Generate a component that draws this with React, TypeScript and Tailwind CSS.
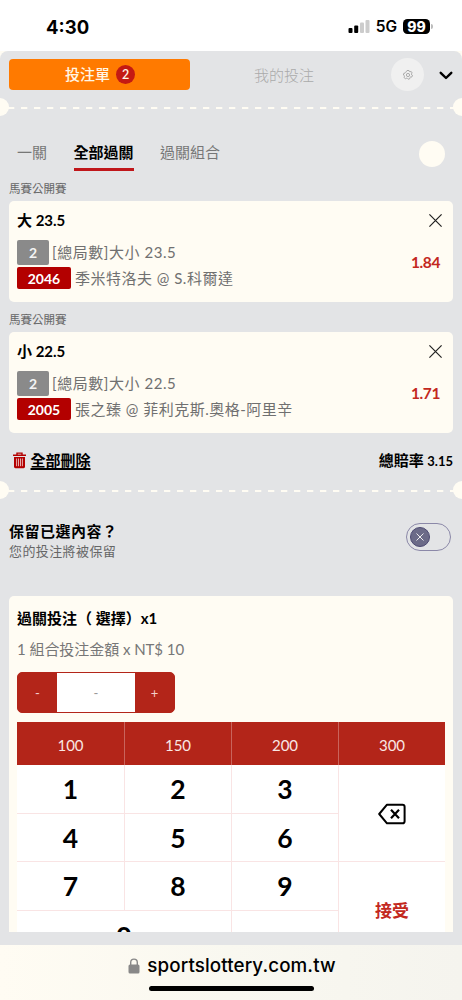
const selections = [
  { league: '馬賽公開賽', pick: '大 23.5', count: '2', market: '[總局數]大小 23.5', code: '2046', match: '季米特洛夫 @ S.科爾達', odds: '1.84' },
  { league: '馬賽公開賽', pick: '小 22.5', count: '2', market: '[總局數]大小 22.5', code: '2005', match: '張之臻 @ 菲利克斯.奧格-阿里辛', odds: '1.71' },
];

const amounts = ['100', '150', '200', '300'];
const digitRows = [
  ['1', '2', '3'],
  ['4', '5', '6'],
  ['7', '8', '9'],
];

function StatusBar() {
  return (
    <div className="h-[51px] shrink-0 bg-white flex items-start justify-between pl-[46px] pr-[29px] font-[Inter,sans-serif] text-black">
      <span className="mt-[15px] text-[18.5px] leading-6 font-bold">4:30</span>
      <div className="mt-[18px] flex items-center h-[17px]">
        <svg width="22" height="15" viewBox="0 0 22 15" className="mr-[6px]">
          <rect x="0.5" y="9" width="4" height="5" rx="1" fill="#000" />
          <rect x="6.2" y="6.5" width="4" height="7.5" rx="1" fill="#000" />
          <rect x="12" y="3.5" width="4" height="10.5" rx="1" fill="#ccc" />
          <rect x="17.5" y="1" width="4" height="13" rx="1" fill="#ccc" />
        </svg>
        <span className="text-[15.5px] leading-[17px] font-semibold mr-[6px]">5G</span>
        <span className="w-[27px] h-[15px] rounded-[4.5px] bg-black text-white text-[14px] leading-[15px] font-extrabold text-center">99</span>
        <span className="ml-px w-[2px] h-[5px] rounded-r-full bg-[#bbb]" />
      </div>
    </div>
  );
}

function Divider() {
  return (
    <div className="relative h-[18px] overflow-hidden flex items-center">
      <svg width="462" height="2" className="mt-px block">
        <line x1="8" y1="1" x2="462" y2="1" stroke="#fffcf3" strokeWidth="2" strokeDasharray="6.3 6.7" />
      </svg>
      <span className="absolute -left-[9px] top-0 size-[18px] rounded-full bg-[#fffcf3]" />
      <span className="absolute -right-[9px] top-0 size-[18px] rounded-full bg-[#fffcf3]" />
    </div>
  );
}

function Selection({ item }: { item: (typeof selections)[number] }) {
  return (
    <div className="h-[131px] px-[9px]">
      <p className="h-[20px] mb-[3px] text-[11.5px] leading-[21px] text-[#666]">{item.league}</p>
      <div className="h-[101px] rounded-[5px] bg-[#fffcf3] pl-2 pr-[13px] pt-[7px]">
        <div className="flex h-[24px] items-center justify-between">
          <span className="text-[15px] leading-6 font-bold text-black">{item.pick}</span>
          <svg width="13" height="13" viewBox="0 0 13 13" className="mr-[-2px]" stroke="#222" strokeWidth="1.2">
            <path d="M.4.4 12.6 12.6M12.6.4.4 12.6" />
          </svg>
        </div>
        <div className="mt-[8px] flex justify-between">
          <div className="text-[15px] text-[#707070]">
            <div className="flex h-[25px] items-center">
              <span className="w-[32px] h-[25px] mr-[3px] rounded-[2px] bg-[#8a8a8a] text-center text-[14px] leading-[25px] font-bold text-[#f4f4f4]">{item.count}</span>
              <span className="leading-[25px] tracking-[0.55px]">{item.market}</span>
            </div>
            <div className="mt-[2px] flex h-[22px] items-center">
              <span className="w-[54px] h-[22px] mr-[4px] rounded-[2px] bg-[#b30000] text-center text-[14px] leading-[23px] font-bold text-white">{item.code}</span>
              <span className="leading-[22px] tracking-[0.5px]">{item.match}</span>
            </div>
          </div>
          <span className="mt-[11px] text-[15.5px] leading-[22px] font-bold tracking-[-0.4px] text-[#c3281e]">{item.odds}</span>
        </div>
      </div>
    </div>
  );
}

function Keypad() {
  return (
    <div className="w-[428px]">
      <div className="grid h-[43px] grid-cols-4 bg-[#b32519]">
        {amounts.map((amount) => (
          <div key={amount} className="border-l border-[#c9645c] first:border-l-0 text-center text-[15px] leading-[46px] text-[#f9e7e4]">
            {amount}
          </div>
        ))}
      </div>
      <div className="flex h-[220px] bg-white text-black">
        <div className="w-[321px]">
          {digitRows.map((row) => (
            <div key={row[0]} className="grid grid-cols-3 border-b border-[#f9e4e4]">
              {row.map((digit) => (
                <div key={digit} className="h-[47.6px] border-l border-[#f9e4e4] first:border-l-0 text-center text-[26.5px] leading-[49px] font-bold">
                  {digit}
                </div>
              ))}
            </div>
          ))}
          <div className="flex">
            <div className="h-[49px] w-[214px] text-center text-[26.5px] leading-[50px] font-bold">0</div>
            <div className="h-[49px] w-[107px] border-l border-[#f9e4e4]" />
          </div>
        </div>
        <div className="w-[107px] border-l border-[#f9e4e4]">
          <div className="flex h-[97px] items-center justify-center border-b border-[#f9e4e4]">
            <svg width="28" height="22" viewBox="0 0 28 22" fill="none" stroke="#000" strokeWidth="2" strokeLinejoin="round" className="mt-px">
              <path d="M9 1.7H24.5Q26.6 1.7 26.6 3.8V18.2Q26.6 20.3 24.5 20.3H9L1.2 11Z" />
              <path d="M13 6.8 21 15.2M21 6.8 13 15.2" strokeWidth="2.2" />
            </svg>
          </div>
          <div className="h-[97px] text-center text-[17px] leading-[97px] font-bold text-[#c3281e]">接受</div>
        </div>
      </div>
    </div>
  );
}

export default function App() {
  return (
    <div className="flex h-[1000px] w-[462px] flex-col overflow-hidden bg-[#fffcf3] font-[Lato,'Noto_Sans_CJK_TC',sans-serif]">
      <StatusBar />

      <div className="h-[894px] shrink-0 overflow-hidden rounded-t-[8px] bg-[#e3e4e6]">
        <div className="flex h-[47px] items-center pl-[9px]">
          <button className="flex h-[31px] w-[181px] items-center justify-center rounded-[4px] bg-[#ff7a00] pl-px text-[15px] font-medium text-[#fff6e6]">
            投注單
            <span className="ml-[6px] size-[19px] rounded-full bg-[#c41a13] text-center text-[12.5px] leading-[20px] font-semibold">2</span>
          </button>
          <span className="ml-[64px] w-[61px] text-[15px] leading-6 font-light text-[#aaa]">我的投注</span>
          <span className="ml-[76px] flex size-[33px] items-center justify-center rounded-full bg-[#f0f0f0]">
            <svg width="10" height="10" viewBox="0 0 10 10" fill="none" stroke="#999" strokeWidth=".8">
              <path d="M4 .5h2l.3 1 .8.3 1-.4 1 1.5-.6.9v.9l1 .7-.8 1.7-1.2-.1-.6.6-.2 1.2-1.7.4-.8-.9-.9-.1-.9.5L.9 7.4l.6-1-.2-.8L.4 5l.5-1.8 1.1-.1.6-.6Z" />
              <circle cx="5" cy="5" r="1.6" />
            </svg>
          </span>
          <svg width="14" height="9" viewBox="0 0 14 9" fill="none" stroke="#000" strokeWidth="2.4" strokeLinecap="round" strokeLinejoin="round" className="mt-px ml-[14.5px]">
            <path d="M1.7 1.8 7 7 12.3 1.8" />
          </svg>
        </div>

        <Divider />

        <div className="flex h-[62px] items-start pt-[24px] pl-[17px] text-[15px] text-[#777]">
          <span className="mr-[26.5px] h-[31px] leading-[25px]">一關</span>
          <span className="mr-[26.5px] h-[31px] border-b-[3px] border-[#c0161a] leading-[25px] font-bold text-black">全部過關</span>
          <span className="h-[31px] leading-[25px]">過關組合</span>
          <span className="mt-[1px] mr-[17px] ml-auto size-[26px] rounded-full bg-[#fffcf3]" />
        </div>

        {selections.map((item) => (
          <Selection key={item.pick} item={item} />
        ))}

        <div className="flex h-[41px] items-center pr-[9px] pl-[13px] text-[15px] font-bold text-black">
          <svg width="13" height="17" viewBox="0 0 13 17" className="mr-[4.5px]">
            <path d="M0 3.3h13M4 3V1.1h5V3" fill="none" stroke="#b30000" strokeWidth="1.4" />
            <path d="M1 5h11v9.8q0 1.4-1.4 1.4H2.4Q1 16.2 1 14.8Z" fill="#b30000" />
            <path d="M3.6 6.5v7.7M5.5 6.5v7.7M7.5 6.5v7.7M9.4 6.5v7.7" stroke="#f4d8d8" strokeWidth=".8" />
          </svg>
          <span className="underline decoration-[1.5px] underline-offset-2">全部刪除</span>
          <span className="ml-auto">總賠率 <span className="text-[13px]">3.15</span></span>
        </div>

        <Divider />

        <div className="flex h-[97px] items-start justify-between pt-[21px] pr-[11px] pl-[9px]">
          <div>
            <p className="text-[15px] leading-[22px] font-bold tracking-[0.5px] text-black">保留已選內容？</p>
            <p className="text-[13px] leading-[19px] tracking-[0.4px] text-[#666]">您的投注將被保留</p>
          </div>
          <div className="mt-[3px] flex h-[28px] w-[45px] items-center rounded-full border border-[#8b88a8] pl-[3px]">
            <span className="flex size-[20px] items-center justify-center rounded-full border border-[#4d4a72] bg-[#6c6b88]">
              <svg width="8" height="8" viewBox="0 0 8 8" stroke="#eee" strokeWidth="1">
                <path d="M.5.5l7 7M7.5.5l-7 7" />
              </svg>
            </span>
          </div>
        </div>

        <div className="mx-[9px] h-[336px] overflow-hidden rounded-t-[5px] bg-[#fffcf3] pt-[10px] pl-2">
          <p className="text-[15px] leading-6 font-bold text-black">過關投注（ 選擇）x1</p>
          <p className="mt-[7px] text-[15px] leading-6 tracking-[-0.05px] text-[#777]">1 組合投注金額 x NT$ 10</p>
          <div className="mt-[11px] mb-[9px] flex h-[41px] w-[158px] overflow-hidden rounded-[5px] border border-[#b32519] bg-[#b32519] text-center text-[13px] leading-[41px] text-[#f3cfcb]">
            <span className="w-[39px]">-</span>
            <span className="w-[78px] bg-white text-[#999]">-</span>
            <span className="w-[39px]">+</span>
          </div>
          <Keypad />
        </div>
      </div>

      <div className="flex h-[55px] flex-col items-center bg-linear-to-r from-[#fffcf3] via-[#f9f8f0] to-[#f5f4ee]">
        <div className="flex h-[41px] items-center pl-[2px] font-[Inter,sans-serif] text-[18.8px] leading-6 font-medium tracking-[0.1px] text-black">
          <svg width="12" height="16" viewBox="0 0 12 16" className="mr-[7px]">
            <path d="M2.7 7V4.4a3.3 3.3 0 0 1 6.6 0V7" fill="none" stroke="#888" strokeWidth="1.4" />
            <rect x=".5" y="6.5" width="11" height="9" rx="1.5" fill="#888" />
          </svg>
          sportslottery.com.tw
        </div>
        <div className="h-[5px] w-[165px] rounded-full bg-black" />
      </div>
    </div>
  );
}
